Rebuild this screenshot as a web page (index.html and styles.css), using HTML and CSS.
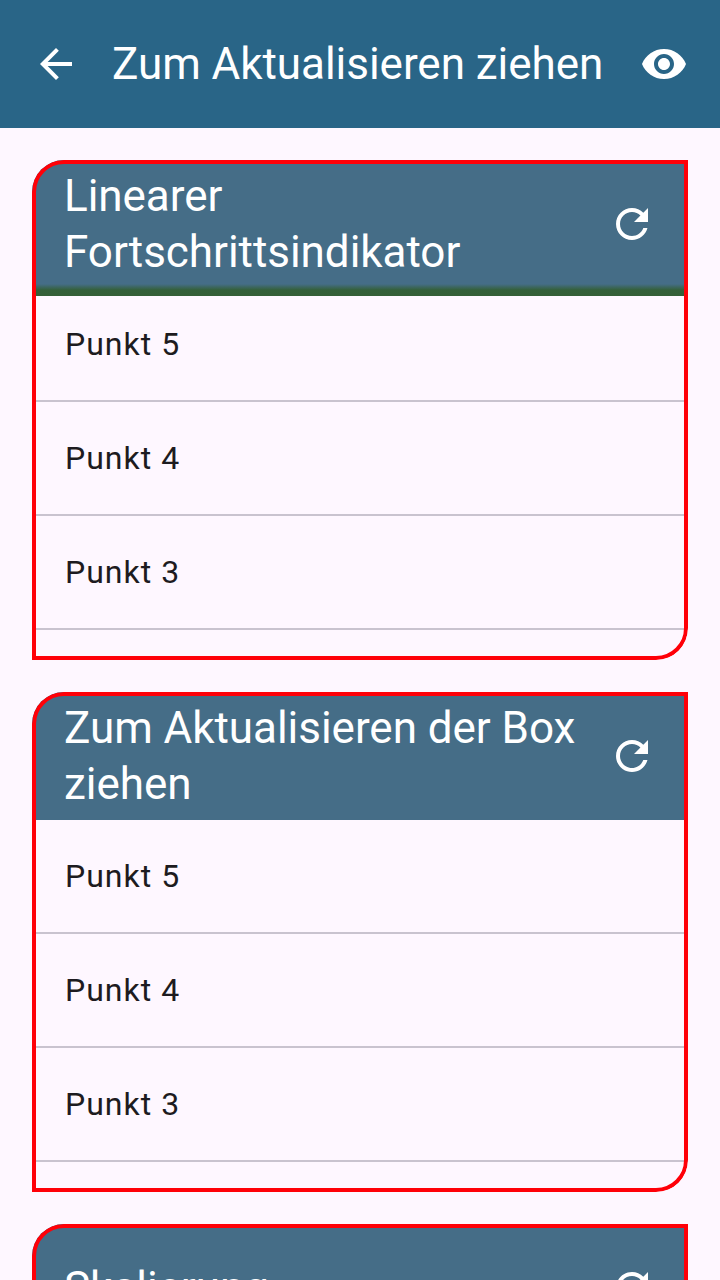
FILE: index.html
```html
<!DOCTYPE html>
<html lang="de">
<head>
<meta charset="utf-8">
<title>Zum Aktualisieren ziehen</title>
<link rel="stylesheet" href="styles.css">
</head>
<body>
<svg class="sprite" aria-hidden="true">
  <symbol id="back" viewBox="0 0 24 24"><path d="M20 11H7.83l5.59-5.59L12 4l-8 8 8 8 1.41-1.41L7.83 13H20v-2z"/></symbol>
  <symbol id="eye" viewBox="0 0 24 24"><path d="M12 4.5C7 4.5 2.73 7.61 1 12c1.73 4.39 6 7.5 11 7.5s9.27-3.11 11-7.5c-1.73-4.39-6-7.5-11-7.5zM12 17c-2.76 0-5-2.24-5-5s2.24-5 5-5 5 2.24 5 5-2.24 5-5 5zm0-8c-1.66 0-3 1.34-3 3s1.34 3 3 3 3-1.34 3-3-1.34-3-3-3z"/></symbol>
  <symbol id="refresh" viewBox="0 0 24 24"><path d="M17.65 6.35C16.2 4.9 14.21 4 12 4c-4.42 0-7.99 3.58-7.99 8s3.57 8 7.99 8c3.73 0 6.84-2.55 7.73-6h-2.08c-.82 2.33-3.04 4-5.65 4-3.31 0-6-2.69-6-6s2.69-6 6-6c1.66 0 3.14.69 4.22 1.78L13 11h7V4l-2.35 2.35z"/></symbol>
</svg>
<div class="screen">
  <header class="app-bar">
    <svg class="icon"><use href="#back"/></svg>
    <h1 class="title">Zum Aktualisieren ziehen</h1>
    <svg class="icon"><use href="#eye"/></svg>
  </header>
  <main class="cards">
    <section class="card">
      <div class="card-bar">
        <h2 class="title">Linearer Fortschrittsindikator</h2>
        <svg class="icon"><use href="#refresh"/></svg>
        <div class="progress"></div>
      </div>
      <ul class="list">
        <li class="item">Punkt 5</li>
        <li class="item">Punkt 4</li>
        <li class="item">Punkt 3</li>
      </ul>
    </section>
    <section class="card">
      <div class="card-bar">
        <h2 class="title">Zum Aktualisieren der Box ziehen</h2>
        <svg class="icon"><use href="#refresh"/></svg>
      </div>
      <ul class="list">
        <li class="item">Punkt 5</li>
        <li class="item">Punkt 4</li>
        <li class="item">Punkt 3</li>
      </ul>
    </section>
    <section class="card">
      <div class="card-bar">
        <h2 class="title">Skalierung</h2>
        <svg class="icon"><use href="#refresh"/></svg>
      </div>
    </section>
  </main>
</div>
</body>
</html>
```
FILE: styles.css
```css
* {
  box-sizing: border-box;
}

body {
  margin: 0;
  background: #fef7ff;
  color: #1d1b20;
  font-family: Roboto, "Noto Sans", sans-serif;
}

.sprite {
  display: none;
}

.screen {
  height: 1280px;
  overflow: hidden;
}

.app-bar {
  display: flex;
  align-items: center;
  gap: 32px;
  height: 128px;
  padding: 0 32px;
  background: #296587;
  color: #fff;
}

.title {
  flex: 1;
  margin: 0;
  font-size: 44px;
  font-weight: 400;
  line-height: 56px;
  letter-spacing: -0.04px;
}

.app-bar .title {
  white-space: nowrap;
}

.icon {
  flex: none;
  width: 48px;
  height: 48px;
  fill: currentColor;
}

.cards {
  display: flex;
  flex-direction: column;
  gap: 32px;
  padding: 32px;
}

.card {
  position: relative;
  height: 500px;
  overflow: hidden;
  border-radius: 32px 0;
}

/* The outline is painted above the bar and the list. */
.card::after {
  content: "";
  position: absolute;
  inset: 0;
  border: 4px solid #ff0008;
  border-radius: inherit;
}

.card-bar {
  position: relative;
  display: flex;
  align-items: center;
  height: 128px;
  padding: 0 32px;
  background: #456d87;
  color: #fff;
}

.progress {
  position: absolute;
  top: 100%;
  left: 0;
  width: 100%;
  height: 12px;
  margin-top: -4px;
  background: linear-gradient(#456d87, #34603a 6px, #355f37);
}

.list {
  margin: 0;
  padding: 0;
  list-style: none;
}

.item {
  display: flex;
  align-items: center;
  height: 114px;
  padding: 0 33px;
  border-bottom: 2px solid #c9c3cf;
  font-size: 32px;
  letter-spacing: 1px;
}
```
